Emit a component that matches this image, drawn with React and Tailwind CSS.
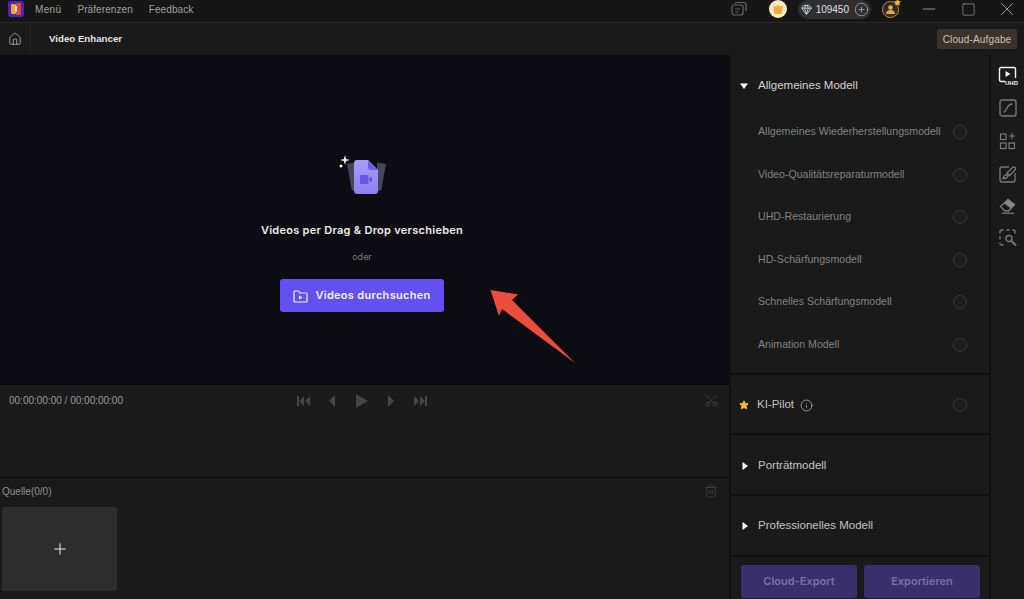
import React from 'react';
import { Home, Minus, Square, X, Plus, Scissors, Trash2, Info, Star, Gem, PlusCircle } from 'lucide-react';

const subModels = [
  'Allgemeines Wiederherstellungsmodell',
  'Video-Qualitätsreparaturmodell',
  'UHD-Restaurierung',
  'HD-Schärfungsmodell',
  'Schnelles Schärfungsmodell',
  'Animation Modell',
];

const Radio = () => (
  <span className="h-[14px] w-[14px] rounded-full border border-[#383838] bg-[#1d1d1d]" />
);

const Caret = ({ open }) => (
  <svg width="8" height="8" viewBox="0 0 8 8" className="shrink-0 fill-white">
    {open ? <path d="M0 1.500h8L4 7z" /> : <path d="M1.500 0v8L7 4z" />}
  </svg>
);

const Logo = () => (
  <svg width="16" height="18" viewBox="0 0 16 18">
    <rect y="1" width="16" height="16" rx="3" fill="#4a24c9" />
    <rect x="3" y="4" width="5" height="10" rx="1" fill="#f5a524" />
    <rect x="8" y="3" width="5" height="12" rx="1" fill="#e8452f" />
    <rect x="7" y="6" width="2" height="6" fill="#f7e7d0" />
  </svg>
);

const TransportIcons = () => (
  <div className="flex items-center text-[#454545]">
    <svg width="13" height="10" viewBox="0 0 13 10" className="mr-[19px] fill-current"><path d="M0 0h2v10H0zM7 0v10L2 5zM13 0v10L8 5z" /></svg>
    <svg width="7" height="12" viewBox="0 0 7 12" className="mr-[20px] fill-current"><path d="M6 0v12L0 6z" /></svg>
    <svg width="12" height="14" viewBox="0 0 12 14" className="mr-[19px] fill-current"><path d="M0 0l12 7-12 7z" /></svg>
    <svg width="7" height="12" viewBox="0 0 7 12" className="mr-[20px] fill-current"><path d="M1 0v12l6-6z" /></svg>
    <svg width="13" height="10" viewBox="0 0 13 10" className="fill-current"><path d="M0 0v10l5-5zM6 0v10l5-5zM11 0h2v10h-2z" /></svg>
  </div>
);

const DropIcon = () => (
  <svg width="50" height="44" viewBox="0 0 50 44">
    <defs>
      <linearGradient id="file" x1="0" y1="0" x2="0" y2="1">
        <stop offset="0" stopColor="#a99ef8" />
        <stop offset="1" stopColor="#8f80f2" />
      </linearGradient>
    </defs>
    <path d="M10 11l8-1.500V38h-1a2.500 2.500 0 0 1-2.500-2z" fill="#474559" />
    <path d="M49 11l-9-1.500V38h2a2.500 2.500 0 0 0 2.500-2z" fill="#474559" />
    <path d="M17 10a3 3 0 0 1 3-3h11l10 10v21a3 3 0 0 1-3 3H20a3 3 0 0 1-3-3z" fill="url(#file)" />
    <path d="M31 7l10 10h-7a3 3 0 0 1-3-3z" fill="#6f5fe8" />
    <rect x="23" y="22" width="8.500" height="9" rx="1" fill="#6b54ee" />
    <path d="M32 25.500l3-2v6l-3-2z" fill="#6b54ee" />
    <path d="M8 2l1.100 3.900L13 7 9.100 8.100 8 12 6.900 8.100 3 7l3.900-1.100z" fill="#f2f2f2" />
    <circle cx="4" cy="13" r="1.500" fill="#f2f2f2" />
  </svg>
);

const SideIcons = () => (
  <div className="flex flex-col items-center pt-[11px] text-[#7a7a7a]">
    <svg width="20" height="20" viewBox="0 0 20 20" fill="none" stroke="#f2f2f2" strokeWidth="1.400">
      <path d="M7 15.500H3A1.500 1.500 0 0 1 1.500 14V3A1.500 1.500 0 0 1 3 1.500h13A1.500 1.500 0 0 1 17.500 3v9" />
      <path d="M7.500 5l5 3-5 3z" fill="#f2f2f2" stroke="none" />
      <text x="7" y="18.500" fontSize="6" fontWeight="700" fill="#f2f2f2" stroke="none" fontFamily="Liberation Sans, sans-serif">UHD</text>
    </svg>
    <svg width="18" height="18" viewBox="0 0 18 18" fill="none" stroke="currentColor" strokeWidth="1.300" className="mt-[13px]">
      <rect x="1" y="1" width="16" height="16" rx="2" />
      <path d="M4.500 13c3.500 0 2.500-8 9-8" />
    </svg>
    <svg width="18" height="18" viewBox="0 0 18 18" fill="none" stroke="currentColor" strokeWidth="1.200" className="mt-[15px]">
      <rect x="1.500" y="2" width="5.500" height="5.500" />
      <rect x="1.500" y="11" width="5.500" height="5.500" />
      <rect x="10" y="11" width="5.500" height="5.500" />
      <path d="M13 1v6M10 4h6" />
    </svg>
    <svg width="18" height="18" viewBox="0 0 18 18" fill="none" stroke="currentColor" strokeWidth="1.300" className="mt-[15px]">
      <path d="M10 2H3a2 2 0 0 0-2 2v11a2 2 0 0 0 2 2h11a2 2 0 0 0 2-2V8" />
      <path d="M16 2.500a1.800 1.800 0 0 0-2.500 0L8 8l2.500 2.500L16 5a1.800 1.800 0 0 0 0-2.500z" />
      <path d="M7.500 9.500L5 11c-.5 1-.5 2-1 2.500 1.500 0 3 0 4-1l1-1.500z" />
    </svg>
    <svg width="18" height="16" viewBox="0 0 18 16" fill="none" stroke="currentColor" strokeWidth="1.300" className="mt-[15px]">
      <path d="M1.500 8.500L9 1.500l6.500 5-6 6.500H6z" />
      <path d="M5.500 5l6.500 5 3.500-3.500-6.500-5z" fill="#8a8a8a" />
      <path d="M3 15.200h12" />
    </svg>
    <svg width="18" height="18" viewBox="0 0 18 18" fill="none" stroke="currentColor" strokeWidth="1.300" className="mt-[15px]">
      <path d="M1 4.500v-2A1.500 1.500 0 0 1 2.500 1h2M7.500 1h3M13.500 1h1A1.500 1.500 0 0 1 16 2.500v2M1 7.500v3M1 13.500v1A1.500 1.500 0 0 0 2.500 16h2M7.500 16h0" />
      <circle cx="10" cy="9.500" r="3" />
      <path d="M12.500 12l4.500 4.500" strokeWidth="1.800" />
    </svg>
  </div>
);

export default function App() {
  return (
    <div className="relative flex h-[599px] w-[1024px] flex-col overflow-hidden bg-[#1a1a1a] font-['Liberation_Sans',sans-serif] text-[#c4c4c4]">
      {/* Title bar */}
      <div className="flex h-[23px] shrink-0 items-center border-b border-[#2b2b2b] bg-[#161616] pb-[4px]">
        <div className="ml-[8px] flex h-[16px] w-[16px] items-center justify-center"><Logo /></div>
        <div className="ml-[11px] flex gap-[16px] text-[10px] tracking-[0.08px] text-[#a0a0a0]">
          <span className="tracking-[0.35px]">Menü</span>
          <span>Präferenzen</span>
          <span>Feedback</span>
        </div>
        <div className="ml-auto flex items-center">
          <svg width="16" height="16" viewBox="0 0 16 16" fill="none" stroke="#666" strokeWidth="1.200">
            <rect x="1" y="4" width="11" height="10" rx="2" />
            <path d="M4 3a2 2 0 0 1 2-1.500h7A2 2 0 0 1 15 3v7M4 8h5M4 11h3" />
          </svg>
          <div className="ml-[22px] flex h-[18px] w-[18px] items-center justify-center rounded-full bg-[#fde9c4]">
            <svg width="10" height="9" viewBox="0 0 10 9" className="fill-[#f0a93c]"><path d="M0 0l2.500 2L5 0l2.500 2L10 0 8.500 9h-7z" /></svg>
          </div>
          <div className="ml-[11px] flex h-[19px] items-center rounded-full bg-[#2e2f33] pl-[3px] pr-[2px] text-[10px] text-[#e0e0e0]">
            <Gem size={11} strokeWidth={1.700} color="#f0f0f0" />
            <span className="ml-[4px] mr-[2px]">109450</span>
            <PlusCircle size={15} strokeWidth={1.200} color="#b5b5b5" className="ml-[3px]" />
          </div>
          <div className="relative ml-[11px] flex h-[17px] w-[17px] items-center justify-center rounded-full border-[1.500px] border-[#c78a2c] bg-[#2a2a2a]">
            <svg width="9" height="9" viewBox="0 0 9 9" className="fill-[#e8a93e]"><circle cx="4.500" cy="2.500" r="2.300" /><path d="M0 9c0-3 2-4 4.500-4S9 6 9 9z" /></svg>
            <Star size={7} className="absolute -right-[3px] -top-[3px] fill-[#f5b942] text-[#f5b942]" />
          </div>
          <Minus size={20} strokeWidth={1} color="#a8a8a8" className="ml-[20px]" />
          <Square size={15} strokeWidth={1} color="#a8a8a8" className="ml-[22px]" />
          <X size={22} strokeWidth={1} color="#a8a8a8" className="ml-[20px] mr-[6px]" />
        </div>
      </div>

      {/* Second bar */}
      <div className="flex h-[32px] shrink-0 items-center bg-[#1a1a1a]">
        <div className="flex h-full w-[31px] items-center justify-center border-r border-[#242424]">
          <Home size={14} strokeWidth={1.300} color="#c0c0c0" />
        </div>
        <span className="ml-[18px] text-[9.700px] font-bold text-[#e4e4e4]">Video Enhancer</span>
        <div className="ml-auto mr-[7px] flex h-[20px] w-[80px] items-center justify-center rounded-[2px] bg-[#3a322b] text-[10px] tracking-[0.15px] text-[#c9c2b8]">
          Cloud-Aufgabe
        </div>
      </div>

      <div className="flex min-h-0 flex-1">
        {/* Left column */}
        <div className="flex w-[729px] shrink-0 flex-col">
          <div className="flex h-[330px] shrink-0 flex-col items-center bg-[#0c0c12] pr-[5px] font-['Inter',sans-serif]">
            <div className="mt-[98px]"><DropIcon /></div>
            <div className="mt-[25px] text-[11px] font-semibold tracking-[0.28px] text-[#ececec]">Videos per Drag &amp; Drop verschieben</div>
            <div className="mt-[11px] text-[9px] text-[#7a7a7a]">oder</div>
            <button className="mt-[16px] flex h-[33px] w-[164px] items-center justify-center rounded-[3px] bg-[#6450f0] text-[11px] font-semibold tracking-[0.3px] text-[#f2f0ff]">
              <svg width="15" height="14" viewBox="0 0 15 14" fill="none" stroke="#f2f0ff" strokeWidth="1.200" className="mr-[7px]">
                <path d="M1 3a1 1 0 0 1 1-1h3.500l1.500 2h6a1 1 0 0 1 1 1v7a1 1 0 0 1-1 1H2a1 1 0 0 1-1-1z" />
                <path d="M6 6.500l3.500 2L6 10.500z" fill="#f2f0ff" stroke="none" />
              </svg>
              Videos durchsuchen
            </button>
          </div>

          {/* Player controls */}
          <div className="flex h-[93px] shrink-0 items-start border-b border-[#0e0e0e] bg-[#1b1b1b]">
            <div className="flex h-[31px] w-full items-center pl-[9px] pr-[10px]">
              <span className="w-[288px] text-[10px] text-[#9a9a9a]">00:00:00:00 / 00:00:00:00</span>
              <TransportIcons />
              <Scissors size={15} strokeWidth={1.200} color="#4a4a4a" className="ml-auto -rotate-90" />
            </div>
          </div>

          {/* Source list */}
          <div className="flex min-h-0 flex-1 flex-col pl-[2px]">
            <div className="flex h-[29px] items-center pb-[3px] pr-[11px]">
              <span className="text-[10px] text-[#8f8f8f]">Quelle(0/0)</span>
              <Trash2 size={14} strokeWidth={1.200} color="#484848" className="ml-auto" />
            </div>
            <div className="flex h-[84px] w-[115px] items-center justify-center rounded-[2px] bg-[#2d2d2d]">
              <Plus size={18} strokeWidth={1.300} color="#f0f0f0" />
            </div>
          </div>
        </div>

        {/* Model panel */}
        <div className="flex w-[262px] shrink-0 flex-col border-l-2 border-r-2 border-[#101010] bg-[#1a1a1a]">
          <div className="flex h-[320px] shrink-0 flex-col border-b-2 border-[#101010] pt-[6px]">
            <div className="flex h-[50px] shrink-0 items-center pl-[9px] text-[11.500px] text-[#d4d4d4]">
              <Caret open />
              <span className="ml-[10px]">Allgemeines Modell</span>
            </div>
            {subModels.map((name) => (
              <div key={name} className="flex h-[42.500px] shrink-0 items-center justify-between pl-[27px] pr-[22px] text-[10.600px] text-[#828282]">
                <span>{name}</span>
                <Radio />
              </div>
            ))}
          </div>
          <div className="flex h-[60px] shrink-0 items-center border-b-2 border-[#101010] pl-[8px] pr-[22px] pt-[2px] text-[11.500px] text-[#c4c4c4]">
            <Star size={10} className="fill-[#f5b942] text-[#f5b942]" />
            <span className="ml-[8px]">KI-Pilot</span>
            <Info size={13} strokeWidth={1.300} color="#c4c4c4" className="ml-[6px]" />
            <span className="ml-auto flex"><Radio /></span>
          </div>
          <div className="flex h-[61px] shrink-0 items-center border-b-2 border-[#101010] pl-[10px] pt-[2px] text-[11.500px] text-[#c4c4c4]">
            <Caret />
            <span className="ml-[9px]">Porträtmodell</span>
          </div>
          <div className="flex h-[61px] shrink-0 items-center border-b-2 border-[#101010] pl-[10px] text-[11.500px] text-[#c4c4c4]">
            <Caret />
            <span className="ml-[9px]">Professionelles Modell</span>
          </div>
          <div className="flex flex-1 items-start gap-[7px] pl-[10px] pt-[8px] font-['Inter',sans-serif]">
            <button className="flex h-[33px] w-[116px] items-center justify-center rounded-[3px] bg-[#392f6b] text-[11px] font-semibold text-[#7a70a8]">Cloud-Export</button>
            <button className="flex h-[33px] w-[116px] items-center justify-center rounded-[3px] bg-[#392f6b] text-[11px] font-semibold text-[#7a70a8]">Exportieren</button>
          </div>
        </div>

        {/* Tool rail */}
        <div className="flex-1 bg-[#1a1a1a]"><SideIcons /></div>
      </div>

      {/* Red annotation arrow */}
      <svg width="100" height="90" viewBox="0 0 100 90" className="absolute left-[485px] top-[285px]">
        <path d="M5.500 5L33 9.500 27 15 90 78 17 24 14 31z" fill="#ee4d3d" />
      </svg>
    </div>
  );
}
